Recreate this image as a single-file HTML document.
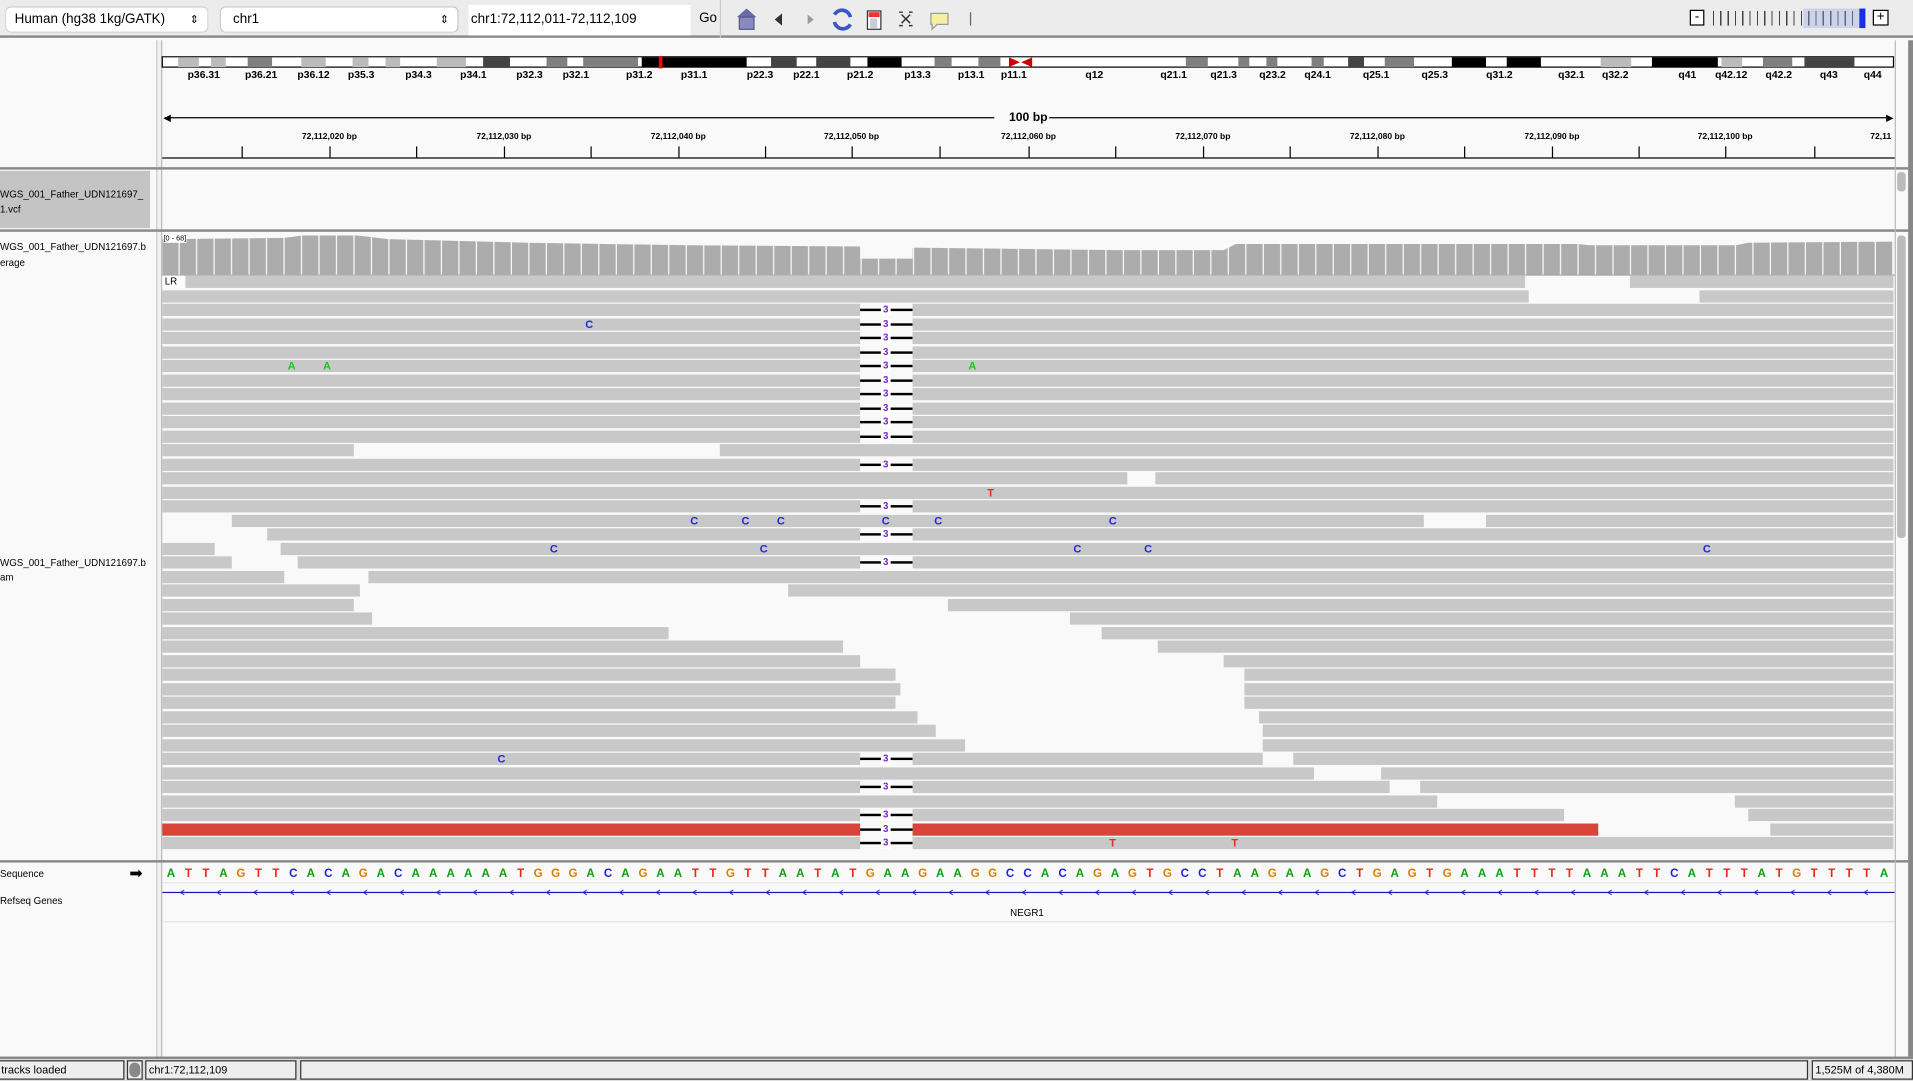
<!DOCTYPE html>
<html><head><meta charset="utf-8"><style>
*{margin:0;padding:0;box-sizing:border-box}
html,body{width:1913px;height:1081px;overflow:hidden;background:#fafafa}
#w{position:absolute;left:0;top:0;width:1568px;height:886px;transform:scale(1.22003);transform-origin:0 0;font-family:"Liberation Sans",sans-serif;background:#f9f9f9;overflow:hidden}
.a{position:absolute}
.row{position:absolute;left:0;width:1568px;height:10px}
.b{position:absolute;top:0;height:10px;background:#c8c8c8}
.d{position:absolute;left:705px;width:43px;top:4px;height:2px;background:#000}
.n{position:absolute;left:722px;width:8px;top:0;text-align:center;background:#fff;color:#7a1fd6;font-size:8px;font-weight:bold;line-height:10px}
.m{position:absolute;top:0;width:10px;text-align:center;font-size:9px;font-weight:bold;line-height:10px}
.C{color:#2424e0}.A{color:#18c818}.T{color:#e03020}
.lbl{position:absolute;font-size:8px;color:#000;white-space:nowrap}
.bl{position:absolute;top:56px;font-size:8.5px;font-weight:bold;transform:translateX(-50%);white-space:nowrap}
.rl{position:absolute;top:109px;font-size:7px;font-weight:bold;transform:translateX(-50%);white-space:nowrap}
.tk{position:absolute;top:120px;width:1px;height:9px;background:#000}
.seq{position:absolute;top:711px;left:133px;font-size:9.5px;font-weight:bold;letter-spacing:0;white-space:nowrap}
.seq span{display:inline-block;width:14.333px;text-align:center}
.sA{color:#10a010}.sT{color:#e8281e}.sG{color:#d88000}.sC{color:#1f1fe6}
.sb{position:absolute;top:869px;height:16px;border:1px solid #333;background:#eee;font-size:9px;line-height:14px;padding-left:2px;white-space:nowrap;overflow:hidden}
</style></head><body><div id="w">
<!-- toolbar -->
<div class="a" style="left:0;top:0;width:1568px;height:31px;background:#ececec;border-bottom:2px solid #8a8a8a"></div>
<div class="a" style="left:5px;top:6px;width:165px;height:20px;background:#fff;border-radius:4px;box-shadow:0 0 1px #999;font-size:11px;line-height:20px;padding-left:7px">Human (hg38 1kg/GATK)<span style="position:absolute;right:7px;font-size:9px">&#8661;</span></div>
<div class="a" style="left:181px;top:6px;width:194px;height:20px;background:#fff;border-radius:4px;box-shadow:0 0 1px #999;font-size:11px;line-height:20px;padding-left:10px">chr1<span style="position:absolute;right:7px;font-size:9px">&#8661;</span></div>
<div class="a" style="left:384px;top:4px;width:182px;height:25px;background:#fff;font-size:11px;line-height:25px;padding-left:2px">chr1:72,112,011-72,112,109</div>
<div class="a" style="left:573px;top:9px;font-size:11px">Go</div>
<div class="a" style="left:590px;top:0;width:1px;height:31px;background:#ccc"></div>
<svg class="a" style="left:600px;top:4px" width="200" height="24">
<path d="M4 10 L12 3 L20 10 Z" fill="#6a6aa8"/><rect x="6" y="10" width="12" height="10" fill="#8a8ac0" stroke="#55558a"/>
<path d="M41 7 L35 12 L41 17Z" fill="#333"/><path d="M62 8 L67 12 L62 16Z" fill="#999"/>
<path d="M84 8 A7 7 0 0 1 97 10 M97 16 A7 7 0 0 1 84 14" stroke="#3b57c6" stroke-width="3" fill="none"/>
<rect x="111" y="5" width="11" height="15" fill="#fff" stroke="#333"/><rect x="112" y="6" width="9" height="4" fill="#e33"/><rect x="113" y="11" width="6" height="8" fill="#ccd"/>
<path d="M139 8 L146 15 M146 8 L139 15 M137 6h3 M145 6h3 M137 17h3 M145 17h3" stroke="#333" stroke-width="1.2"/>
<path d="M163 7 h14 v9 h-9 l-4 4 v-4 h-1z" fill="#f4f0a0" stroke="#999"/>
<rect x="195" y="6" width="1" height="11" fill="#666"/>
</svg>
<div class="a" style="left:1385px;top:8px;width:12px;height:13px;border:1px solid #000;background:#fff;font-size:11px;line-height:10px;text-align:center">-</div>
<div class="a" style="left:1404px;top:9px;width:122px;height:12px;background:repeating-linear-gradient(90deg,#444 0 1px,transparent 1px 6px)"></div>
<div class="a" style="left:1478px;top:7px;width:46px;height:16px;background:rgba(150,170,230,.35)"></div>
<div class="a" style="left:1524px;top:7px;width:5px;height:16px;background:#1c2fe0"></div>
<div class="a" style="left:1535px;top:8px;width:13px;height:13px;border:1px solid #000;background:#fff;font-size:11px;line-height:11px;text-align:center">+</div>
<!-- frames -->
<div class="a" style="left:128px;top:33px;width:5px;height:835px;background:#f0f0f0;border-left:1px solid #ccc;border-right:1px solid #bbb"></div>
<div class="a" style="left:0;top:137px;width:1568px;height:2px;background:#888"></div>
<div class="a" style="left:0;top:188px;width:1568px;height:2px;background:#888"></div>
<div class="a" style="left:0;top:705px;width:1568px;height:2px;background:#888"></div>
<div class="a" style="left:1553px;top:33px;width:1px;height:835px;background:#bbb"></div>
<div class="a" style="left:1564px;top:33px;width:4px;height:835px;background:#888"></div>
<div class="a" style="left:1555px;top:141px;width:7px;height:16px;border-radius:3px;background:#bbb"></div>
<div class="a" style="left:1555px;top:193px;width:7px;height:248px;border-radius:3px;background:#bbb"></div>
<!-- ideogram -->
<svg class="a" style="left:0;top:46px" width="1568" height="10">
<rect x="133" y="0.5" width="1419" height="8.5" fill="#fff" stroke="#000"/>
<g fill="#bbb"><rect x="146" y="1" width="17" height="8"/><rect x="173" y="1" width="12" height="8"/><rect x="247" y="1" width="20" height="8"/><rect x="289" y="1" width="13" height="8"/><rect x="316" y="1" width="12" height="8"/><rect x="358" y="1" width="24" height="8"/><rect x="1312" y="1" width="25" height="8"/><rect x="1411" y="1" width="17" height="8"/></g>
<g fill="#808080"><rect x="203" y="1" width="20" height="8"/><rect x="448" y="1" width="17" height="8"/><rect x="478" y="1" width="45" height="8"/><rect x="766" y="1" width="14" height="8"/><rect x="802" y="1" width="18" height="8"/><rect x="972" y="1" width="18" height="8"/><rect x="1015" y="1" width="9" height="8"/><rect x="1038" y="1" width="9" height="8"/><rect x="1075" y="1" width="10" height="8"/><rect x="1135" y="1" width="24" height="8"/><rect x="1445" y="1" width="24" height="8"/></g>
<g fill="#444"><rect x="396" y="1" width="22" height="8"/><rect x="632" y="1" width="21" height="8"/><rect x="669" y="1" width="28" height="8"/><rect x="1105" y="1" width="13" height="8"/><rect x="1479" y="1" width="41" height="8"/></g>
<g fill="#000"><rect x="526" y="1" width="86" height="8"/><rect x="711" y="1" width="28" height="8"/><rect x="1190" y="1" width="28" height="8"/><rect x="1235" y="1" width="28" height="8"/><rect x="1354" y="1" width="54" height="8"/></g>
<rect x="540" y="-1" width="3" height="12" fill="#f00"/>
<path d="M827 1 L836 5 L827 9Z M846 1 L837 5 L846 9Z" fill="#c00"/>
</svg>
<div class="bl" style="left:167px">p36.31</div><div class="bl" style="left:214px">p36.21</div><div class="bl" style="left:257px">p36.12</div><div class="bl" style="left:296px">p35.3</div><div class="bl" style="left:343px">p34.3</div><div class="bl" style="left:388px">p34.1</div><div class="bl" style="left:434px">p32.3</div><div class="bl" style="left:472px">p32.1</div><div class="bl" style="left:524px">p31.2</div><div class="bl" style="left:569px">p31.1</div><div class="bl" style="left:623px">p22.3</div><div class="bl" style="left:661px">p22.1</div><div class="bl" style="left:705px">p21.2</div><div class="bl" style="left:752px">p13.3</div><div class="bl" style="left:796px">p13.1</div><div class="bl" style="left:831px">p11.1</div><div class="bl" style="left:897px">q12</div><div class="bl" style="left:962px">q21.1</div><div class="bl" style="left:1003px">q21.3</div><div class="bl" style="left:1043px">q23.2</div><div class="bl" style="left:1080px">q24.1</div><div class="bl" style="left:1128px">q25.1</div><div class="bl" style="left:1176px">q25.3</div><div class="bl" style="left:1229px">q31.2</div><div class="bl" style="left:1288px">q32.1</div><div class="bl" style="left:1324px">q32.2</div><div class="bl" style="left:1383px">q41</div><div class="bl" style="left:1419px">q42.12</div><div class="bl" style="left:1458px">q42.2</div><div class="bl" style="left:1499px">q43</div><div class="bl" style="left:1535px">q44</div>
<!-- ruler -->
<div class="a" style="left:135px;top:96px;width:680px;height:1px;background:#000"></div>
<div class="a" style="left:860px;top:96px;width:690px;height:1px;background:#000"></div>
<svg class="a" style="left:133px;top:93px" width="1420" height="8"><path d="M1 4 L7 1 L7 7Z M1419 4 L1413 1 L1413 7Z" fill="#000"/></svg>
<div class="a" style="left:827px;top:91px;font-size:10px;font-weight:bold">100 bp</div>
<div class="rl" style="left:270px">72,112,020 bp</div><div class="rl" style="left:413px">72,112,030 bp</div><div class="rl" style="left:556px">72,112,040 bp</div><div class="rl" style="left:698px">72,112,050 bp</div><div class="rl" style="left:843px">72,112,060 bp</div><div class="rl" style="left:986px">72,112,070 bp</div><div class="rl" style="left:1129px">72,112,080 bp</div><div class="rl" style="left:1272px">72,112,090 bp</div><div class="rl" style="left:1414px">72,112,100 bp</div><div class="a" style="left:1533px;top:109px;font-size:7px;font-weight:bold;width:20px;overflow:hidden;white-space:nowrap">72,11</div>
<div class="tk" style="left:198px"></div><div class="tk" style="left:270px"></div><div class="tk" style="left:341px"></div><div class="tk" style="left:413px"></div><div class="tk" style="left:484px"></div><div class="tk" style="left:556px"></div><div class="tk" style="left:627px"></div><div class="tk" style="left:698px"></div><div class="tk" style="left:770px"></div><div class="tk" style="left:843px"></div><div class="tk" style="left:914px"></div><div class="tk" style="left:986px"></div><div class="tk" style="left:1057px"></div><div class="tk" style="left:1129px"></div><div class="tk" style="left:1200px"></div><div class="tk" style="left:1272px"></div><div class="tk" style="left:1343px"></div><div class="tk" style="left:1414px"></div><div class="tk" style="left:1487px"></div>
<div class="a" style="left:133px;top:129px;width:1420px;height:1px;background:#000"></div>
<!-- left labels -->
<div class="a" style="left:0;top:140px;width:123px;height:47px;background:#c4c4c4"></div>
<div class="lbl" style="left:0;top:155px;width:123px;overflow:hidden">WGS_001_Father_UDN121697_</div>
<div class="lbl" style="left:0;top:167px">1.vcf</div>
<div class="lbl" style="left:0;top:198px">WGS_001_Father_UDN121697.b</div>
<div class="lbl" style="left:0;top:211px">erage</div>
<div class="lbl" style="left:0;top:457px">WGS_001_Father_UDN121697.b</div>
<div class="lbl" style="left:0;top:469px">am</div>
<div class="lbl" style="left:0;top:712px">Sequence</div>
<div class="a" style="left:106px;top:709px;font-size:13px;line-height:13px">&#10145;</div>
<div class="lbl" style="left:0;top:734px">Refseq Genes</div>
<!-- coverage -->
<svg class="a" style="left:133px;top:190px" width="1420" height="36">
<defs><pattern id="g" x="0" y="0" width="14.333" height="40" patternUnits="userSpaceOnUse"><rect x="0" y="0" width="13.3" height="40" fill="#acacac"/></pattern></defs>
<polygon fill="url(#g)" points="0,6 100,5 115,3 160,3 185,6 300,9 430,11 572,12 572,22 615,22 615,13 700,14 780,15 870,15 880,10 1160,10 1170,11 1290,11 1300,9 1419,8 1419,35 0,35"/>
</svg>
<div class="a" style="left:134px;top:193px;font-size:6px;background:#fff">[0 - 68]</div>
<div class="a" style="left:133px;top:225px;width:1420px;height:1px;background:#aaa"></div>
<!-- reads -->
<div class="row" style="top:226px"><div class="a" style="left:133px;top:0;width:18px;height:10px;background:#fff;font-size:8px;line-height:10px;padding-left:2px">LR</div><div class="b" style="left:152px;width:1098px"></div><div class="b" style="left:1336px;width:216px"></div></div>
<div class="row" style="top:237.5px"><div class="b" style="left:133px;width:1120px"></div><div class="b" style="left:1393px;width:159px"></div></div>
<div class="row" style="top:249px"><div class="b" style="left:133px;width:572px"></div><div class="d"></div><div class="n">3</div><div class="b" style="left:748px;width:804px"></div></div>
<div class="row" style="top:260.5px"><div class="b" style="left:133px;width:572px"></div><div class="d"></div><div class="n">3</div><div class="b" style="left:748px;width:804px"></div><div class="m C" style="left:478px">C</div></div>
<div class="row" style="top:272px"><div class="b" style="left:133px;width:572px"></div><div class="d"></div><div class="n">3</div><div class="b" style="left:748px;width:804px"></div></div>
<div class="row" style="top:283.5px"><div class="b" style="left:133px;width:572px"></div><div class="d"></div><div class="n">3</div><div class="b" style="left:748px;width:804px"></div></div>
<div class="row" style="top:295px"><div class="b" style="left:133px;width:572px"></div><div class="d"></div><div class="n">3</div><div class="b" style="left:748px;width:804px"></div><div class="m A" style="left:234px">A</div><div class="m A" style="left:263px">A</div><div class="m A" style="left:792px">A</div></div>
<div class="row" style="top:306.5px"><div class="b" style="left:133px;width:572px"></div><div class="d"></div><div class="n">3</div><div class="b" style="left:748px;width:804px"></div></div>
<div class="row" style="top:318px"><div class="b" style="left:133px;width:572px"></div><div class="d"></div><div class="n">3</div><div class="b" style="left:748px;width:804px"></div></div>
<div class="row" style="top:329.5px"><div class="b" style="left:133px;width:572px"></div><div class="d"></div><div class="n">3</div><div class="b" style="left:748px;width:804px"></div></div>
<div class="row" style="top:341px"><div class="b" style="left:133px;width:572px"></div><div class="d"></div><div class="n">3</div><div class="b" style="left:748px;width:804px"></div></div>
<div class="row" style="top:352.5px"><div class="b" style="left:133px;width:572px"></div><div class="d"></div><div class="n">3</div><div class="b" style="left:748px;width:804px"></div></div>
<div class="row" style="top:364px"><div class="b" style="left:133px;width:157px"></div><div class="b" style="left:590px;width:962px"></div></div>
<div class="row" style="top:375.5px"><div class="b" style="left:133px;width:572px"></div><div class="d"></div><div class="n">3</div><div class="b" style="left:748px;width:804px"></div></div>
<div class="row" style="top:387px"><div class="b" style="left:133px;width:791px"></div><div class="b" style="left:947px;width:605px"></div></div>
<div class="row" style="top:398.5px"><div class="b" style="left:133px;width:1419px"></div><div class="m T" style="left:807px">T</div></div>
<div class="row" style="top:410px"><div class="b" style="left:133px;width:572px"></div><div class="d"></div><div class="n">3</div><div class="b" style="left:748px;width:804px"></div></div>
<div class="row" style="top:421.5px"><div class="b" style="left:190px;width:977px"></div><div class="b" style="left:1218px;width:334px"></div><div class="m C" style="left:564px">C</div><div class="m C" style="left:606px">C</div><div class="m C" style="left:635px">C</div><div class="m C" style="left:721px">C</div><div class="m C" style="left:764px">C</div><div class="m C" style="left:907px">C</div></div>
<div class="row" style="top:433px"><div class="b" style="left:219px;width:486px"></div><div class="d"></div><div class="n">3</div><div class="b" style="left:748px;width:804px"></div></div>
<div class="row" style="top:444.5px"><div class="b" style="left:133px;width:43px"></div><div class="b" style="left:230px;width:1322px"></div><div class="m C" style="left:449px">C</div><div class="m C" style="left:621px">C</div><div class="m C" style="left:878px">C</div><div class="m C" style="left:936px">C</div><div class="m C" style="left:1394px">C</div></div>
<div class="row" style="top:456px"><div class="b" style="left:133px;width:57px"></div><div class="b" style="left:244px;width:461px"></div><div class="d"></div><div class="n">3</div><div class="b" style="left:748px;width:804px"></div></div>
<div class="row" style="top:467.5px"><div class="b" style="left:133px;width:100px"></div><div class="b" style="left:302px;width:1250px"></div></div>
<div class="row" style="top:479px"><div class="b" style="left:133px;width:162px"></div><div class="b" style="left:646px;width:906px"></div></div>
<div class="row" style="top:490.5px"><div class="b" style="left:133px;width:157px"></div><div class="b" style="left:777px;width:775px"></div></div>
<div class="row" style="top:502px"><div class="b" style="left:133px;width:172px"></div><div class="b" style="left:877px;width:675px"></div></div>
<div class="row" style="top:513.5px"><div class="b" style="left:133px;width:415px"></div><div class="b" style="left:903px;width:649px"></div></div>
<div class="row" style="top:525px"><div class="b" style="left:133px;width:558px"></div><div class="b" style="left:949px;width:603px"></div></div>
<div class="row" style="top:536.5px"><div class="b" style="left:133px;width:572px"></div><div class="b" style="left:1003px;width:549px"></div></div>
<div class="row" style="top:548px"><div class="b" style="left:133px;width:601px"></div><div class="b" style="left:1020px;width:532px"></div></div>
<div class="row" style="top:559.5px"><div class="b" style="left:133px;width:605px"></div><div class="b" style="left:1020px;width:532px"></div></div>
<div class="row" style="top:571px"><div class="b" style="left:133px;width:601px"></div><div class="b" style="left:1020px;width:532px"></div></div>
<div class="row" style="top:582.5px"><div class="b" style="left:133px;width:619px"></div><div class="b" style="left:1032px;width:520px"></div></div>
<div class="row" style="top:594px"><div class="b" style="left:133px;width:634px"></div><div class="b" style="left:1035px;width:517px"></div></div>
<div class="row" style="top:605.5px"><div class="b" style="left:133px;width:658px"></div><div class="b" style="left:1035px;width:517px"></div></div>
<div class="row" style="top:617px"><div class="b" style="left:133px;width:572px"></div><div class="d"></div><div class="n">3</div><div class="b" style="left:748px;width:287px"></div><div class="b" style="left:1060px;width:492px"></div><div class="m C" style="left:406px">C</div></div>
<div class="row" style="top:628.5px"><div class="b" style="left:133px;width:944px"></div><div class="b" style="left:1132px;width:420px"></div></div>
<div class="row" style="top:640px"><div class="b" style="left:133px;width:572px"></div><div class="d"></div><div class="n">3</div><div class="b" style="left:748px;width:391px"></div><div class="b" style="left:1164px;width:388px"></div></div>
<div class="row" style="top:651.5px"><div class="b" style="left:133px;width:1045px"></div><div class="b" style="left:1422px;width:130px"></div></div>
<div class="row" style="top:663px"><div class="b" style="left:133px;width:572px"></div><div class="d"></div><div class="n">3</div><div class="b" style="left:748px;width:534px"></div><div class="b" style="left:1433px;width:119px"></div></div>
<div class="row" style="top:674.5px"><div class="b" style="left:133px;width:572px;background:#d8433a"></div><div class="d"></div><div class="n">3</div><div class="b" style="left:748px;width:562px;background:#d8433a"></div><div class="b" style="left:1451px;width:101px"></div></div>
<div class="row" style="top:686px"><div class="b" style="left:133px;width:572px"></div><div class="d"></div><div class="n">3</div><div class="b" style="left:748px;width:804px"></div><div class="m T" style="left:907px">T</div><div class="m T" style="left:1007px">T</div></div>
<!-- sequence -->
<div class="seq"><span class="sA">A</span><span class="sT">T</span><span class="sT">T</span><span class="sA">A</span><span class="sG">G</span><span class="sT">T</span><span class="sT">T</span><span class="sC">C</span><span class="sA">A</span><span class="sC">C</span><span class="sA">A</span><span class="sG">G</span><span class="sA">A</span><span class="sC">C</span><span class="sA">A</span><span class="sA">A</span><span class="sA">A</span><span class="sA">A</span><span class="sA">A</span><span class="sA">A</span><span class="sT">T</span><span class="sG">G</span><span class="sG">G</span><span class="sG">G</span><span class="sA">A</span><span class="sC">C</span><span class="sA">A</span><span class="sG">G</span><span class="sA">A</span><span class="sA">A</span><span class="sT">T</span><span class="sT">T</span><span class="sG">G</span><span class="sT">T</span><span class="sT">T</span><span class="sA">A</span><span class="sA">A</span><span class="sT">T</span><span class="sA">A</span><span class="sT">T</span><span class="sG">G</span><span class="sA">A</span><span class="sA">A</span><span class="sG">G</span><span class="sA">A</span><span class="sA">A</span><span class="sG">G</span><span class="sG">G</span><span class="sC">C</span><span class="sC">C</span><span class="sA">A</span><span class="sC">C</span><span class="sA">A</span><span class="sG">G</span><span class="sA">A</span><span class="sG">G</span><span class="sT">T</span><span class="sG">G</span><span class="sC">C</span><span class="sC">C</span><span class="sT">T</span><span class="sA">A</span><span class="sA">A</span><span class="sG">G</span><span class="sA">A</span><span class="sA">A</span><span class="sG">G</span><span class="sC">C</span><span class="sT">T</span><span class="sG">G</span><span class="sA">A</span><span class="sG">G</span><span class="sT">T</span><span class="sG">G</span><span class="sA">A</span><span class="sA">A</span><span class="sA">A</span><span class="sT">T</span><span class="sT">T</span><span class="sT">T</span><span class="sT">T</span><span class="sA">A</span><span class="sA">A</span><span class="sA">A</span><span class="sT">T</span><span class="sT">T</span><span class="sC">C</span><span class="sA">A</span><span class="sT">T</span><span class="sT">T</span><span class="sT">T</span><span class="sA">A</span><span class="sT">T</span><span class="sG">G</span><span class="sT">T</span><span class="sT">T</span><span class="sT">T</span><span class="sT">T</span><span class="sA">A</span></div>
<div class="a" style="left:133px;top:723px;width:1420px;height:1px;background:#e8e8e8"></div>
<svg class="a" style="left:133px;top:728px" width="1420" height="8">
<defs><pattern id="ch" x="10" y="0" width="30" height="8" patternUnits="userSpaceOnUse"><path d="M8 1.5 L5 3.5 L8 5.5" stroke="#1a1ab0" stroke-width="0.8" fill="none"/></pattern></defs>
<rect x="0" y="3" width="1420" height="1" fill="#1a1ab0"/><rect x="0" y="0" width="1420" height="8" fill="url(#ch)"/>
</svg>
<div class="a" style="left:828px;top:744px;font-size:8px">NEGR1</div>
<div class="a" style="left:133px;top:755px;width:1420px;height:1px;background:#e4e4e4"></div>
<!-- status bar -->
<div class="a" style="left:0;top:866px;width:1568px;height:20px;background:#ddd;border-top:2px solid #888"></div>
<div class="sb" style="left:-2px;width:104px">tracks loaded</div>
<div class="sb" style="left:104px;width:13px;padding:0"><div style="width:9px;height:12px;margin:1px;border-radius:5px;background:#888"></div></div>
<div class="sb" style="left:119px;width:124px">chr1:72,112,109</div>
<div class="sb" style="left:246px;width:1236px"></div>
<div class="sb" style="left:1485px;width:83px">1,525M of 4,380M</div>
</div></body></html>
